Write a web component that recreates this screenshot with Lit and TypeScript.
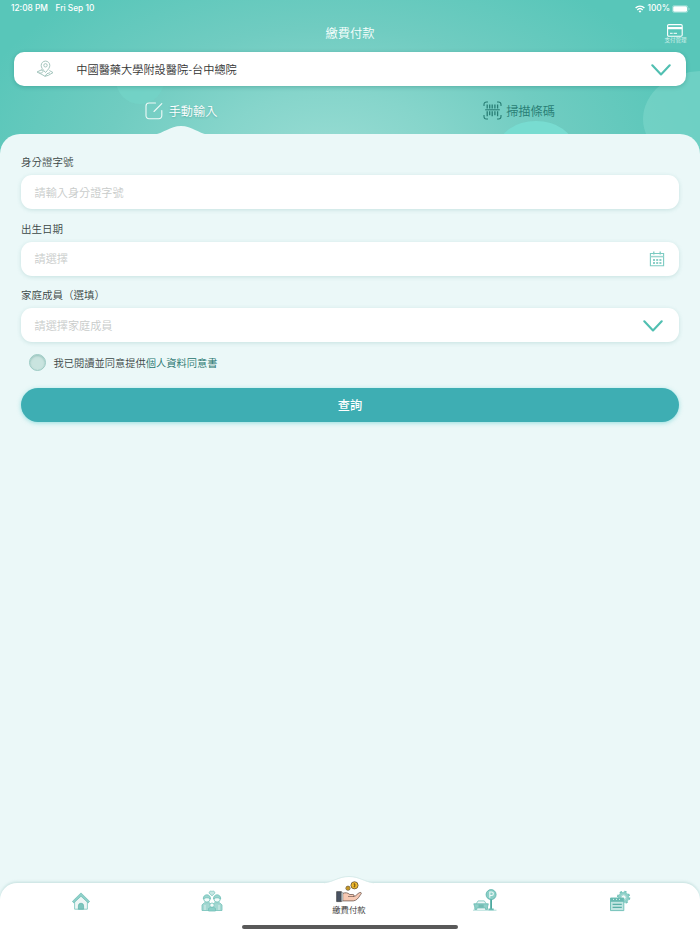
import { LitElement, html, css, svg, nothing } from "lit";
import { customElement, property } from "lit/decorators.js";

const icons: Record<string, unknown> = {
  home: html`<svg width="18" height="18" viewBox="0 0 18 18">
    <path d="M2.6 8V17.2H15.4V8L9 2.6Z" fill="#eef6f5" stroke="#85cbc3" stroke-width=".9"/>
    <path d="M.4 9.4 9 .9l8.600 8.500-1.400 1.500L9 4.200 1.800 10.900Z" fill="#8fd0c9" stroke="#6dbdb4" stroke-width=".7"/>
    <path d="M6.400 17.200v-3.400a2.600 2.600 0 0 1 5.200 0v3.400Z" fill="#7cc5bd" stroke="#5fb2a9" stroke-width=".7"/>
  </svg>`,
  family: html`<svg width="22" height="22" viewBox="0 0 22 22">
    <path d="M11 5.800 8.400 3.400C7.500 1.700 9.900.2 11 1.700c1.100-1.500 3.500 0 2.600 1.700Z" fill="#c5e7e3" stroke="#70c0b7" stroke-width=".7"/>
    <g stroke="#74c2b9" stroke-width=".8">
      <path d="M1 20.500v-5.600l2.500-2.200h5l2.500 2.800 2.500-2.800h5l2.500 2.200v5.600Z" fill="#a4d8d2"/>
      <circle cx="5.900" cy="8.900" r="3.200" fill="#f3fbfa"/><circle cx="16.100" cy="8.900" r="3.200" fill="#f3fbfa"/>
      <path d="M2.300 9c-.3-5.600 7.500-5.600 7.200 0-2-1.700-5.200-1.700-7.200 0Zm10.200 0c-.3-5.600 7.500-5.600 7.200 0-2-1.700-5.200-1.700-7.200 0Z" fill="#9bd5cf"/>
      <circle cx="11" cy="15.200" r="2.200" fill="#f3fbfa"/>
      <path d="M7.500 21v-2.600l2-1h3l2 1V21Z" fill="#8ccfc8"/>
      <path d="M4 15v5M18 15v5" stroke="#e6f5f3"/>
    </g></svg>`,
  pay: html`<svg width="26" height="22" viewBox="0 0 26 22">
    <g stroke="#4d4030" stroke-width=".7">
      <circle cx="18.500" cy="4.300" r="3.600" fill="#efb92c"/><circle cx="12" cy="7.200" r="2.100" fill="#efb92c"/>
    </g>
    <path d="M18.500 2.300v4M17.400 3h1.600v2.600h-1.500M12 6v2.400" stroke="#795713" stroke-width=".7" fill="none"/>
    <path d="M6.400 12.600c3.300-1.600 5.300-.8 7.400.9h3.100c1.500 0 1.700 1.700.3 2 1.600 0 2.600-.7 3.700-1.900 1.400-1.400 3.100-2.700 4.200-1.900.7.600-.2 1.500-.8 2.300-2.100 3.300-3.700 5.500-7 5.900H6.400Z" fill="#f7c9b3" stroke="#5c4841" stroke-width=".7"/>
    <path d="M12 15.500h5" stroke="#5c4841" stroke-width=".6"/>
    <path d="M.6 10.600H5.400V20.600H.6Z" fill="#495363" stroke="#333" stroke-width=".6"/>
    <path d="M5.400 11.400h1.500v8.600H5.400Z" fill="#dce8ec" stroke="#555" stroke-width=".4"/>
  </svg>`,
  parking: html`<svg width="24" height="22" viewBox="0 0 24 22">
    <path d="M17.200 9h1.800v12h-1.800Z" fill="#4ca99f"/>
    <path d="M15.500 19.500h5.200v1.800h-5.200Z" fill="#62b8af"/>
    <circle cx="18.100" cy="5.600" r="5" fill="#8bcfc7" stroke="#5bb3aa" stroke-width=".8"/>
    <path d="M16.800 8.800V3h1.800a1.700 1.700 0 0 1 0 3.500h-1.800" fill="none" stroke="#effaf8" stroke-width="1.100"/>
    <path d="m3.200 14.800 1.900-2.900h6.200l1.900 2.900" fill="#ecf7f6" stroke="#74c2b9" stroke-width=".8"/>
    <path d="M.8 14.800H15.300l-.8 3.200v2.500h-2V19H3.800v1.500h-2V18Z" fill="#8fd0c8" stroke="#68bab1" stroke-width=".8"/>
    <path d="M5.500 16.200h5.200M5.500 17.800h5.200" stroke="#58a79f" stroke-width=".7"/>
    <path d="M0 21.200h23.500" stroke="#8dcfc8" stroke-width=".7"/>
  </svg>`,
  settings: html`<svg width="22" height="22" viewBox="0 0 22 22">
    <circle cx="14.600" cy="7.400" r="4.200" fill="none" stroke="#8fd0c8" stroke-width="2.800"/>
    <circle cx="14.600" cy="7.400" r="5.900" fill="none" stroke="#74c2b9" stroke-width="1.600" stroke-dasharray="2.300 2.330"/>
    <circle cx="14.600" cy="7.400" r="2.600" fill="#f3faf9" stroke="#74c2b9" stroke-width=".7"/>
    <path d="M1.500 8H14.800v12.600H1.500Z" fill="#c2e6e2" stroke="#74c2b9"/>
    <path d="M1.500 8H14.800v3.800H1.500Z" fill="#68bab1"/>
    <path d="M4 9.400h1M7 9.400h1M10 9.400h1" stroke="#d8f1ee"/>
    <path d="M3.600 14.400h9.200M3.600 17.400h9.200" stroke="#5bb0a7" stroke-width="1.200"/>
  </svg>`,
  pin: html`<svg width="18" height="18" viewBox="0 0 18 18" fill="none" stroke="#a3c5bd" stroke-width="1">
    <path d="M9.500 12.500C6.500 9.300 5.200 7.400 5.200 5.400a4.300 4.300 0 0 1 8.600 0c0 2-1.300 3.900-4.300 7.100Z"/>
    <circle cx="9.500" cy="5.300" r="1.700"/>
    <path d="M5.800 9.700 1 12l5 2.500 3 1.800 3.400-1 4.600-2.700-3.600-2.100M5.200 10c2 .5 2.400 1.400 1.200 2.400-.9.800-2.700.7-3.200.3M9 16.300l2-2.600 3-1"/>
  </svg>`,
  chevron: html`<svg width="20" height="12" viewBox="0 0 20 12"><path d="M1.300 1.300 10 10.500l8.700-9.200" fill="none" stroke="#50bfb1" stroke-width="2.100" stroke-linecap="round" stroke-linejoin="round"/></svg>`,
  calendar: html`<svg width="16" height="16" viewBox="0 0 16 16">
    <path d="M1.400 2.500h13.200v12.200H1.400Z" fill="none" stroke="#7ccbc2" stroke-width="1.100"/>
    <path d="M1.400 5.600h13.200" stroke="#9bd6cf" stroke-width="1.500"/>
    <path d="M4.800.6v2.800M11.200.6v2.800" stroke="#7ccbc2" stroke-width="1.300"/>
    <path d="M4 9h8.400M4 12h8.400" stroke="#8bd0c8" stroke-width="1.800" stroke-dasharray="2 1.200"/>
  </svg>`,
  edit: html`<svg width="18" height="18" viewBox="0 0 18 18" fill="none" stroke="#effaf8" stroke-width="1.100" stroke-linecap="round">
    <path d="M10.500 1H4a3 3 0 0 0-3 3v9.800a3 3 0 0 0 3 3h9.800a3 3 0 0 0 3-3V8.500M9 9.500l7.800-7.800"/></svg>`,
  barcode: html`<svg width="19" height="19" viewBox="0 0 19 19" fill="none" stroke="#287d74" stroke-width="1.100">
    <path d="M5 1H3.400A2.400 2.400 0 0 0 1 3.400V5M14 1h1.600A2.400 2.400 0 0 1 18 3.400V5M5 18H3.400A2.400 2.400 0 0 1 1 15.600V14M14 18h1.600a2.400 2.400 0 0 0 2.400-2.400V14"/>
    <path d="M2.200 8.800H16.800"/>
    <path d="M4.200 3.500v4M6.700 3.500v4M9.200 3.500v4M11.900 3.500v4M14.600 3.500v4M4.200 10.300v5M6.700 10.300v4M9.200 10.300v5M11.900 10.300v4M14.600 10.300v5" stroke-width="1.300"/>
  </svg>`,
  card: html`<svg width="16" height="13" viewBox="0 0 16 13"><rect x=".6" y=".6" width="14.600" height="11.600" rx="1.200" fill="none" stroke="#fff" stroke-width="1.100"/><path d="M.6 4.100h14.600" stroke="#fff" stroke-width="2.300"/><path d="M3 9.300h2.700M6.600 9.300h3.400" stroke="#fff" stroke-width="1"/></svg>`,
  wifi: html`<svg width="10" height="8" viewBox="0 0 10 8" fill="none" stroke="#fff" stroke-width="1.450"><path d="M.6 2.900a6.300 6.300 0 0 1 8.800 0M2.300 4.900a3.900 3.900 0 0 1 5.400 0"/><path d="m5 7.800-1.400-1.500a1.900 1.900 0 0 1 2.800 0Z" fill="#fff" stroke="none"/></svg>`,
  battery: html`<svg width="18" height="8" viewBox="0 0 18 8"><rect x=".4" y=".4" width="15.400" height="7.200" rx="2.200" fill="none" stroke="#fff" stroke-opacity=".5" stroke-width=".7"/><rect x="1.200" y="1.200" width="13.800" height="5.600" rx="1.300" fill="#fff"/><path d="M16.700 2.800v2.400q.8-.3.800-1.200t-.8-1.200" fill="#fff" opacity=".5"/></svg>`,
};

@customElement("form-field")
class FormField extends LitElement {
  @property() label = "";
  @property() hint = "";
  @property() icon = "";
  static styles = css`
    :host { display: block; height: 66.600px; }
    svg { display: block; flex: none; }
    .label { height: 20px; line-height: 14px; font-size: 10.500px; color: #3b4746; }
    .box { height: 34px; box-sizing: border-box; display: flex; align-items: center; justify-content: space-between; padding: 0 14px 0 13.500px; background: #fff; border-radius: 11px; box-shadow: 0 1px 4px rgba(75, 150, 145, .22); color: #c8cbca; font-size: 11.150px; line-height: 16px; }
    .box > span:first-child { margin-top: -1px; }
    .chevron { margin: 1px 2px 0 0; }
  `;
  render() {
    return html`<div class="label">${this.label}</div>
      <div class="box"><span>${this.hint}</span>
        ${this.icon ? html`<span class="icon ${this.icon}">${icons[this.icon]}</span>` : nothing}</div>`;
  }
}

@customElement("app-root")
class AppRoot extends LitElement {
  static styles = css`
    :host { display: flex; flex-direction: column; height: 934px; overflow: hidden; background: #ebf8f8; font-family: "Noto Sans CJK TC", sans-serif; font-weight: 350; }
    svg { display: block; flex: none; }
    .header { position: relative; height: 156px; flex: none; background: radial-gradient(ellipse 370px 215px at 47% 100%, #98dcd3 0%, #86d5cb 30%, #70ccc1 60%, #58c6b9 100%); overflow: hidden; }
    .bubbles { position: absolute; inset: 0; }
    .content { position: relative; height: 134px; display: flex; flex-direction: column; }
    .status { height: 17px; box-sizing: border-box; padding: 0 10px 0 11px; display: flex; align-items: center; color: #fff; font: 500 8.350px/17px Inter, sans-serif; }
    .date { margin-left: 7.500px; flex: 1; }
    .percent { margin: 0 2px 0 2.500px; }
    .titlebar { height: 35px; flex: none; display: grid; grid-template-columns: 1fr auto 1fr; }
    .title { color: #f7fffd; font-size: 12.300px; line-height: 33px; }
    .manage { justify-self: end; margin-right: 13.500px; padding-top: 7px; display: flex; flex-direction: column; align-items: center; color: #e3f8f4; font-size: 5.500px; line-height: 7px; }
    .hospital { height: 34px; flex: none; box-sizing: border-box; margin: 0 14px; padding: 0 15.500px 0 22px; border-radius: 10px; background: #fff; display: flex; align-items: center; color: #333; font-size: 11.200px; line-height: 16px; box-shadow: 0 1px 4px rgba(20, 110, 100, .32); }
    .hospital .name { flex: 1; margin: -1px 0 0 22.300px; }
    .hospital svg:last-child { margin-top: 1px; }
    .tabs { margin: 0 12px; flex: 1; padding-top: 1px; display: grid; grid-template-columns: 1fr 1fr; }
    .tab { display: flex; justify-content: center; align-items: center; gap: 4px; font-size: 12.200px; color: #287d74; }
    .tab.on { color: #fff; gap: 6px; text-shadow: 0 1px 2px rgba(20, 110, 100, .35); }
    .panel { position: relative; flex: 1; margin-top: -22px; padding: 21px 21px 0; background: #ebf8f8; border-radius: 20px 20px 0 0; }
    .bump { position: absolute; left: 155px; top: -9px; }
    .consent { display: flex; align-items: center; height: 17px; padding-left: 8px; margin-top: -.4px; font-size: 10.250px; color: #3b4746; }
    .check { width: 17px; height: 17px; box-sizing: border-box; border-radius: 50%; border: 1px solid #9ccbc4; background: #c9e4df; box-shadow: inset 0 1px 2px rgba(60, 130, 120, .35); margin-right: 7.500px; }
    .link { color: #24736c; }
    .submit { display: block; width: 100%; height: 34px; margin-top: 16.600px; padding: 0; border: 0; border-radius: 17px; background: #3eaeb3; color: #fff; font: 500 12.200px/34px "Noto Sans CJK TC", sans-serif; box-shadow: 0 1px 4px rgba(62, 200, 200, .5); }
    .nav { position: relative; height: 51.500px; flex: none; background: #fff; border-radius: 17px 17px 0 0; box-shadow: 0 -1px 3px rgba(100, 165, 160, .3); }
    .hump { position: absolute; left: 320px; top: -8px; }
    .items { position: relative; display: grid; grid-template-columns: 130px 132px 142px 129px 142px; padding-left: 16px; }
    .item { display: flex; flex-direction: column; align-items: center; padding-top: 7.500px; }
    .item.home { padding-top: 9.500px; }
    .item.parking { padding-top: 6px; }
    .item.pay { margin-top: -1.500px; padding-top: 0; color: #333; font-size: 8.400px; line-height: 13px; }
    .indicator { position: absolute; left: 242px; bottom: 5.300px; width: 215.500px; height: 4px; border-radius: 2px; background: #595959; }
  `;
  render() {
    return html`
      <header class="header">
        <svg class="bubbles" width="700" height="156">${svg`
          <circle cx="140" cy="80" r="24" fill="#74d4c8" opacity=".7"/>
          <ellipse cx="703" cy="119" rx="60" ry="48" fill="#7bd5c9" opacity=".65"/>
          <ellipse cx="536" cy="148" rx="38" ry="27" fill="#78dcd1"/>`}</svg>
        <div class="content">
          <div class="status"><span>12:08 PM</span><span class="date">Fri Sep 10</span>${icons.wifi}<span class="percent">100%</span>${icons.battery}</div>
          <div class="titlebar"><span></span><span class="title">繳費付款</span><div class="manage">${icons.card}<span>支付管理</span></div></div>
          <div class="hospital">${icons.pin}<span class="name">中國醫藥大學附設醫院-台中總院</span>${icons.chevron}</div>
          <div class="tabs">
            <div class="tab on">${icons.edit}<span>手動輸入</span></div>
            <div class="tab">${icons.barcode}<span>掃描條碼</span></div>
          </div>
        </div>
      </header>
      <main class="panel">
        <svg class="bump" width="52" height="11" viewBox="0 0 52 11"><path d="M0 9.500C8 8.500 15 1 26 1S44 8.500 52 9.500V11H0Z" fill="#ebf8f8"/></svg>
        <form-field label="身分證字號" hint="請輸入身分證字號"></form-field>
        <form-field label="出生日期" hint="請選擇" icon="calendar"></form-field>
        <form-field label="家庭成員（選填）" hint="請選擇家庭成員" icon="chevron"></form-field>
        <div class="consent"><span class="check"></span><span>我已閱讀並同意提供</span><span class="link">個人資料同意書</span></div>
        <button class="submit">查詢</button>
      </main>
      <nav class="nav">
        <svg class="hump" width="58" height="12" viewBox="0 0 58 12"><path d="M0 8.500C13 8 17 2 29 2S45 8 58 8.500V12H0Z" fill="#fff"/><path d="M4 7.800C14 7 18 1.500 29 1.500S44 7 54 7.800" fill="none" stroke="#d3e9e7" stroke-width=".8"/></svg>
        <div class="items">
          <div class="item home">${icons.home}</div>
          <div class="item">${icons.family}</div>
          <div class="item pay">${icons.pay}<span>繳費付款</span></div>
          <div class="item parking">${icons.parking}</div>
          <div class="item">${icons.settings}</div>
        </div>
        <div class="indicator"></div>
      </nav>`;
  }
}
